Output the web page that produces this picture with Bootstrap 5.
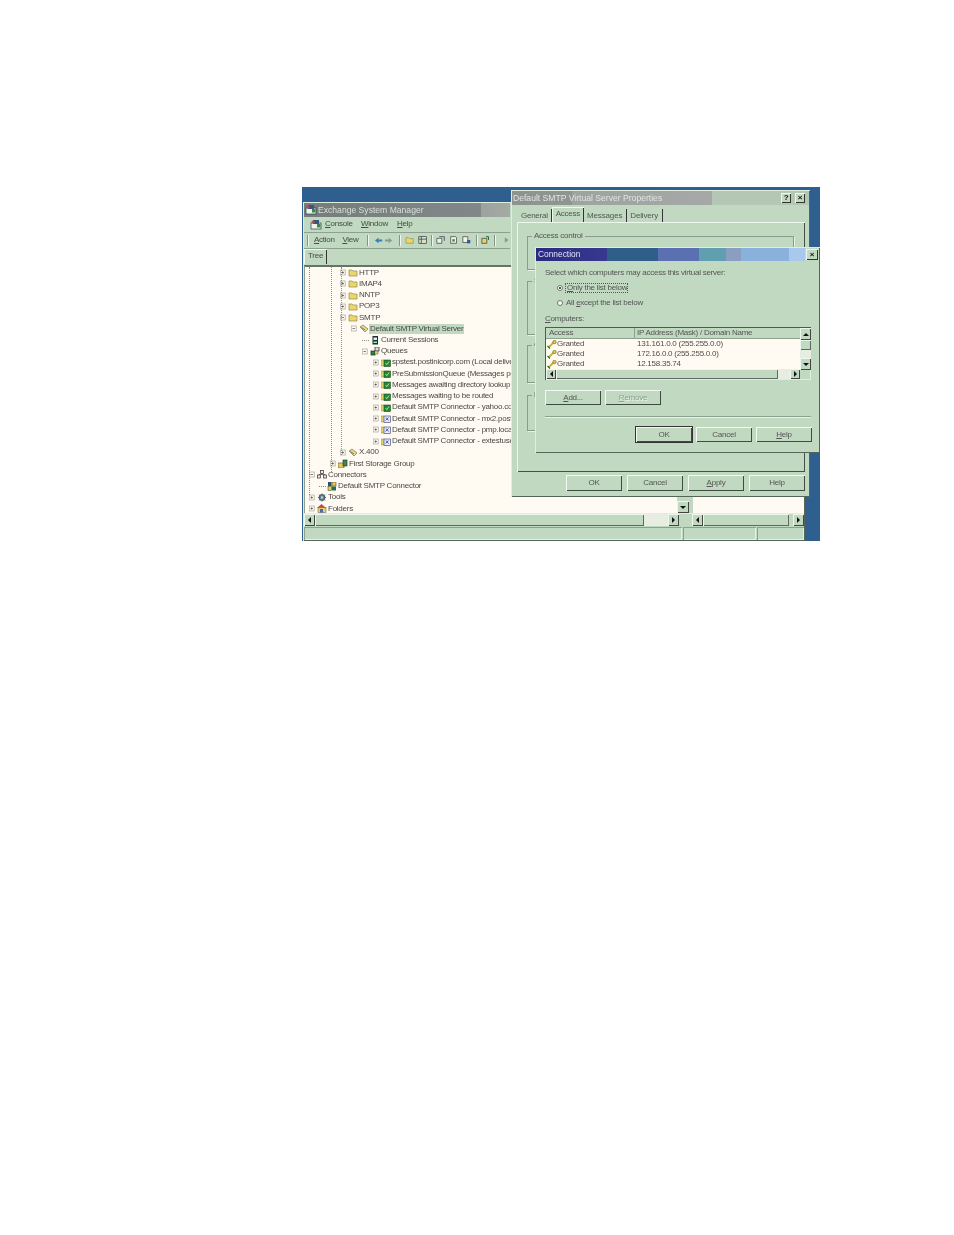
<!DOCTYPE html>
<html lang="en">
<head>
<meta charset="utf-8">
<title>Default SMTP Virtual Server Properties</title>
<link href="https://cdn.jsdelivr.net/npm/bootstrap@5.3.0/dist/css/bootstrap.min.css" rel="stylesheet">
<style>
html,body{background:#fff;margin:0;height:1235px;overflow:hidden}
body{font-family:"Liberation Sans",Arial,sans-serif;font-size:8px;line-height:1;color:#4a4a48;letter-spacing:-.25px}
.pg{padding:187px 0 0 302px}
.desk{position:relative;width:518px;height:354px;background:#2f5f8e;filter:blur(.35px)}
.winbox{position:absolute;background:#c0d9c0;box-shadow:inset 1px 1px 0 #dfeedf,inset -1px -1px 0 #55655a}
.mainw{left:1px;top:15px;width:502px;height:339px;padding:1px}
.propw{left:209px;top:3px;width:299px;height:307px;padding:1px}
.connw{left:233px;top:60px;width:285px;height:206px;padding:1px}
.ttl{height:14px;color:#d9dfd9;font-size:8.6px;letter-spacing:0;background:linear-gradient(90deg,#747d7a 0,#82888a 86%,#9da29e 86%,#a4aaa4 100%);padding-left:1px;width:206px}
.ttl svg{margin-right:1px}
.ttl2{height:14px;color:#dfe6df;font-size:8.6px;letter-spacing:0;width:200px;padding-left:1px;background:linear-gradient(90deg,#8d9490 0,#8f9692 30%,#9ea3a0 30%,#a5a8a6 100%)}
.ttlrow{background:#b4c6b4}
.capbtn{width:10px;height:10px;background:#c0d9c0;box-shadow:inset 1px 1px 0 #eef6ee,inset -1px -1px 0 #333;color:#111;font-weight:700;font-size:8px}
.menub{height:16px;border-bottom:1px solid #8da08f;padding-left:6px;width:206px}
.menub svg{margin-right:3px}
.mc{width:36px}.mw{width:36px}
.toolb{height:16px;border-bottom:1px solid #8da08f;width:206px;padding-left:3px}
.tact{margin-left:6px;width:31px}
.tsep1{margin:0 6px 0 8px}
.tsep2{margin:0 4px}
.tsep3{margin:0 5px}
.tarrow{width:22px}
.tic{margin-right:4px}
.tabstrip{height:16px;width:206px}
.treetab{width:23px;height:15px;box-shadow:inset 1px 1px 0 #eef6ee,inset -1px 0 0 #333}
.sep{width:1px;height:11px;background:#849587;box-shadow:1px 0 0 #eef6ee;flex:none}
.treewrap{height:249px;position:relative;background:#fffbf2;border-top:2px solid #66746a;border-left:1px solid #8da08f;overflow:hidden;padding-top:.2px}
.tvs{position:absolute;left:372px;top:0;bottom:0;width:13px;background:#c0d9c0;box-shadow:1px 0 0 #8da08f}
.tvs .arrb{height:12px;width:12px}
.tgap{position:absolute;left:385px;top:0;bottom:0;width:3px;background:#c0d9c0}
.gline{position:absolute;top:0;width:0;border-left:1px dotted #8c8c80}
.trow{height:11.24px;white-space:nowrap;color:#4a4a48;font-size:8px}
.trow svg{flex:none}
.exp{width:8px;flex:none}
.stub{height:1px;background-image:linear-gradient(90deg,#8c8c80 50%,transparent 50%);background-size:2px 1px}
.ico{margin-right:1px}
.hi{background:#c0d9c0;padding:1px}
.p4{padding-left:4px}.p14{padding-left:14px}.p25{padding-left:25px}.p35{padding-left:35px}.p46{padding-left:46px}.p57{padding-left:57px}.p68{padding-left:68px}
.sbar{height:13px;border-top:1px solid #dfeedf}
.arrb{width:11px;height:12px;flex:none;background:#c0d9c0;box-shadow:inset 1px 1px 0 #eef6ee,inset -1px -1px 0 #444;color:#111}
.thumb{background:#c0d9c0;box-shadow:inset 1px 1px 0 #eef6ee,inset -1px -1px 0 #5c6b60}
.dots{background-color:#e7ede2;background-image:radial-gradient(#b7c6b7 .6px,transparent .7px);background-size:2px 2px}
.stat{height:14px;padding-top:1px;gap:1px}
.statc{height:13px;box-shadow:inset 1px 1px 0 #8da08f,inset -1px -1px 0 #e6f1e6}
.wbtn{padding:0;width:56px;height:16px;border-radius:0;border:0;background:#c0d9c0;font-size:8px;line-height:1;letter-spacing:-.25px;color:#555;box-shadow:inset 1px 1px 0 #f2f8f2,inset -1px -1px 0 #3e4a42}
.wbtn.dflt{box-shadow:0 0 0 1px #333,inset 1px 1px 0 #f2f8f2,inset -1px -1px 0 #3e4a42}
.wbtn.dim{color:#8e9d91;text-shadow:.5px .5px 0 #eef6ee}
.tabsrow{padding:4px 0 0 6px;height:17px}
.wtab{height:13px;padding:3px 4px 0 3px;box-shadow:inset -1px 0 0 #333;color:#555}
.wtab.on{margin-top:-2px;height:15px;box-shadow:inset 1px 1px 0 #eef6ee,inset -1px 0 0 #333;padding:3px 4px 0 4px}
.wtab.wide{letter-spacing:-.15px;padding-right:5px}
.tpanel{height:250px;margin:0 4px 0 5px;box-shadow:inset 1px 1px 0 #eef6ee,inset -1px -1px 0 #445048;padding:14px 11px 0 10px}
.grp{border:1px solid #8a9b8e;box-shadow:1px 1px 0 #e8f2e8;position:relative}
.grp b{position:absolute;left:4px;top:-5px;font-weight:400;background:#c0d9c0;padding:0 2px;line-height:8px;color:#555}
.g1{height:34px;margin-bottom:11px}.g2{height:54px;margin-bottom:10px}.g3{height:38px;margin-bottom:12px}.g4{height:36px}
.actrow{padding:3px 4px 0 0;gap:5px}
.conttl{height:13px;font-size:8.4px;letter-spacing:0;padding-left:2px;line-height:13px;background:linear-gradient(90deg,#2a2a80 0,#383890 71px,#2f5f88 71px,#2f5f88 122px,#5a70b0 122px,#5a70b0 163px,#5f9fb0 163px,#5f9fb0 190px,#8a9fc0 190px,#8a9fc0 205px,#8ab0dc 205px,#8ab0dc 253px,#a8c8ec 253px,#a8c8ec 269px,#c0d9c0 269px)}
.conttl .capbtn{margin:1px 1px 0 0;line-height:10px;height:11px;width:12px}
.conttl span{color:#dce4f4}
.connb{padding:8px 8px 0 9px;color:#555}
.selline{margin-bottom:3px}
.radrow{height:15px}
.radlast{margin-bottom:5px}
.rad{width:6px;height:6px;border-radius:50%;background:#fffbf2;border:1px solid #6d7a70;margin:0 3px 0 12px;flex:none;position:relative}
.rad.sel::after{content:"";position:absolute;left:1px;top:1px;width:2px;height:2px;background:#222;border-radius:50%}
.focusd{outline:1px dotted #555;padding:0 0 0 1px}
.lst{height:53px;width:266px;box-shadow:inset 1px 1px 0 #4e5a52,inset -1px -1px 0 #e0eee0;position:relative;padding:1px}
.lhead{height:11px;width:254px;border-bottom:1px solid #8da08f}
.lc1{width:88px;padding-left:3px}
.lc2{padding-left:3px;box-shadow:inset 1px 0 0 #8da08f;height:10px;line-height:10px}
.lbody{background:#fffbf2;width:254px;height:30px;color:#4e4e4c}
.lrow{height:10.1px}
.lk{width:11px;flex:none;padding-left:1px}
.lgr{width:80px;flex:none}
.vs{position:absolute;left:255px;top:1px;width:11px;height:42px}
.vs .thumb{height:11px}
.vs .dots{height:9px}
.hs{height:10px;width:254px}
.hs .arrb{height:10px;width:10px}
.addrow{margin-top:10px}
.hr1{border-top:1px solid #8da08f;border-bottom:1px solid #e6f1e6;height:2px;width:266px;margin-top:11px}
.okrow{margin-top:9px;width:267px}
.okrow .wbtn,.addrow .wbtn{height:15px}
</style>
</head>
<body>
<svg width="0" height="0" class="position-absolute">
  <defs>
    <symbol id="folder" viewBox="0 0 10 9"><path d="M1 2h3l1 1h4v5H1z" fill="#ecd66a" stroke="#8f8a55" stroke-width=".7"/></symbol>
    <symbol id="plus" viewBox="0 0 8 7"><rect x=".2" y="1" width="5" height="5" fill="#fffbf2" stroke="#a5a59a" stroke-width=".7"/><path d="M1.500 3.500h2.400M2.700 2.300v2.400" stroke="#444" stroke-width=".7"/></symbol>
    <symbol id="minus" viewBox="0 0 8 7"><rect x=".2" y="1" width="5" height="5" fill="#fffbf2" stroke="#a5a59a" stroke-width=".7"/><path d="M1.500 3.500h2.400" stroke="#444" stroke-width=".7"/></symbol>
    <symbol id="server" viewBox="0 0 10 9"><path d="M1 3l3-2 5 4-3 3z" fill="#e8d98a" stroke="#777755" stroke-width=".7"/><path d="M2.500 3.500l3.500 2.500" stroke="#445" stroke-width=".7"/></symbol>
    <symbol id="queue" viewBox="0 0 10 9"><path d="M0 2h3l1 1h2v5H0z" fill="#e6cf66" stroke="#8a8450" stroke-width=".5"/><rect x="3" y="2" width="6.500" height="6.500" fill="#1f8a2e" stroke="#204a24" stroke-width=".6"/><path d="M4.500 5.500l1.500 1 2-3" fill="none" stroke="#dff2c0" stroke-width=".8"/></symbol>
    <symbol id="queue2" viewBox="0 0 10 9"><path d="M0 2h3l1 1h2v5H0z" fill="#e6cf66" stroke="#8a8450" stroke-width=".5"/><rect x="3" y="2" width="6.500" height="6.500" fill="#e8ecf4" stroke="#303a70" stroke-width=".6"/><path d="M4.500 6.500l3-3M5 3.500l2.500 3" stroke="#2233aa" stroke-width=".8"/></symbol>
    <symbol id="queues" viewBox="0 0 10 9"><rect x="5" y="0" width="4" height="4" fill="#ddd" stroke="#222" stroke-width=".7"/><rect x="1" y="4" width="4" height="4" fill="#2e8a38" stroke="#222" stroke-width=".7"/><path d="M5 4h3v3H5" fill="#e6cf66" stroke="#555" stroke-width=".5"/></symbol>
    <symbol id="session" viewBox="0 0 9 9"><rect x="2" y="0" width="5.500" height="8.500" fill="#1d2f3a"/><rect x="3" y="1.500" width="3.500" height="2.500" fill="#e8f0f0"/><rect x="3" y="5.500" width="3.500" height="1.500" fill="#8fa"/></symbol>
    <symbol id="storage" viewBox="0 0 10 9"><path d="M0 4h6v5H0z" fill="#e4cc55" stroke="#555533" stroke-width=".6"/><rect x="5" y="1" width="4" height="6" fill="#3a8a40" stroke="#223" stroke-width=".6"/></symbol>
    <symbol id="conn" viewBox="0 0 10 9"><rect x="3.500" y=".5" width="3" height="3" fill="#e8e8e8" stroke="#333" stroke-width=".7"/><rect x=".5" y="5" width="3" height="3" fill="#e8e8e8" stroke="#333" stroke-width=".7"/><rect x="6.500" y="5" width="3" height="3" fill="#e8e8e8" stroke="#333" stroke-width=".7"/><path d="M5 3.500V5M2 5V4.500h6V5" fill="none" stroke="#333" stroke-width=".6"/></symbol>
    <symbol id="smtpconn" viewBox="0 0 10 9"><rect x="1" y="0" width="3.500" height="4" fill="#33506a"/><rect x="5" y="0" width="4" height="4" fill="#e4cc55" stroke="#333" stroke-width=".5"/><rect x="1" y="4.500" width="3.500" height="4" fill="#e4cc55" stroke="#333" stroke-width=".5"/><rect x="5" y="4.500" width="4" height="4" fill="#2d6d45"/></symbol>
    <symbol id="gear" viewBox="0 0 10 9"><circle cx="5" cy="4.500" r="3" fill="#7d97a8" stroke="#334" stroke-width=".8"/><path d="M5 .5v8M1 4.500h8M2 1.500l6 6M8 1.500l-6 6" stroke="#3a6a7a" stroke-width=".9"/><circle cx="5" cy="4.500" r="1.200" fill="#c0d9c0"/></symbol>
    <symbol id="foldset" viewBox="0 0 10 9"><path d="M4.500 0L9 4H0z" fill="#c94a3a"/><rect x="1" y="3.500" width="8" height="5" fill="#e4d070" stroke="#555" stroke-width=".5"/><rect x="3" y="5" width="3" height="3.500" fill="#4a6aa8"/></symbol>
    <symbol id="mmc" viewBox="0 0 12 11"><rect x="1" y="4" width="10" height="6" fill="#ecf1ec" stroke="#26405c" stroke-width=".7"/><path d="M3 1h6v4H3z" fill="#33587e"/><circle cx="3" cy="3" r="1.600" fill="#c44"/><rect x="7" y="5" width="3.500" height="3.500" fill="#3a8a40"/></symbol>
    <symbol id="key" viewBox="0 0 10 9"><path d="M1.500 7.500l5-5" stroke="#c9b23a" stroke-width="1.800"/><circle cx="7.500" cy="2" r="1.700" fill="#e6d24e" stroke="#3a3a20" stroke-width=".5"/><path d="M.5 6l2.500 2.500" stroke="#1e7a2e" stroke-width="1.300"/></symbol>
  </defs>
</svg>
<div class="pg">
<div class="desk">

  <section class="winbox mainw d-flex flex-column">
    <div class="d-flex align-items-center ttl"><svg width="12" height="11"><use href="#mmc"/></svg><span>Exchange System Manager</span></div>
    <div class="d-flex align-items-center menub">
      <svg width="12" height="11"><use href="#mmc"/></svg>
      <span class="mc"><u>C</u>onsole</span><span class="mw"><u>W</u>indow</span><span><u>H</u>elp</span>
    </div>
    <div class="d-flex align-items-center toolb">
      <span class="sep"></span><span class="tact"><u>A</u>ction</span><span><u>V</u>iew</span>
      <span class="sep tsep1"></span>
      <svg class="tarrow" width="22" height="9" viewBox="0 0 22 9"><path d="M1 4.500L5 1.500v2h4v2H5v2z" fill="#3c7fb0"/><path d="M20 4.500L16 1.500v2h-4v2h4v2z" fill="#8a9a98"/></svg>
      <span class="sep tsep3"></span>
      <svg width="10" height="10" class="tic"><use href="#folder"/></svg>
      <svg width="10" height="10" viewBox="0 0 11 10"><rect x="1" y="1" width="9" height="8" fill="#d8e2c0" stroke="#333" stroke-width=".8"/><path d="M4 1v8M1 4h9" stroke="#334a8a"/></svg>
      <span class="sep tsep2"></span>
      <svg width="10" height="10" class="tic" viewBox="0 0 11 10"><path d="M1 3h6v6H1z" fill="#eee" stroke="#333" stroke-width=".8"/><path d="M4 1h6v5" fill="none" stroke="#335" stroke-width=".9"/></svg>
      <svg width="10" height="10" class="tic" viewBox="0 0 11 10"><path d="M2 1h6l1 1v7H2z" fill="#f2f4ea" stroke="#333" stroke-width=".8"/><path d="M4 4h3v3H4z" fill="#4a8a4a"/></svg>
      <svg width="10" height="10" viewBox="0 0 11 10"><path d="M1 1h6v7H1z" fill="#f2f4ea" stroke="#333" stroke-width=".8"/><path d="M6 5h4v4H6z" fill="#3a5a9a"/></svg>
      <span class="sep tsep2"></span>
      <svg width="10" height="10" viewBox="0 0 11 10"><path d="M1 3h6v6H1z" fill="#e4d070" stroke="#333" stroke-width=".8"/><path d="M6 1h3v4" fill="none" stroke="#2a6a3a" stroke-width="1.200"/></svg>
      <span class="sep tsep2"></span>
      <svg width="8" height="8" class="ms-1" viewBox="0 0 8 8"><path d="M2 1l4 3-4 3z" fill="#8a9a90"/></svg>
    </div>
    <div class="tabstrip d-flex"><div class="treetab d-flex align-items-center justify-content-center">Tree</div></div>
    <div class="treewrap">
      <span class="gline" style="left:4px;height:228px"></span>
      <span class="gline" style="left:26px;height:205px"></span>
      <span class="gline" style="left:36px;height:188px"></span>
      <div class="trow d-flex align-items-center p35"><svg class="exp" width="8" height="7"><use href="#plus"/></svg><svg class="ico" width="10" height="9"><use href="#folder"/></svg><span>HTTP</span></div>
      <div class="trow d-flex align-items-center p35"><svg class="exp" width="8" height="7"><use href="#plus"/></svg><svg class="ico" width="10" height="9"><use href="#folder"/></svg><span>IMAP4</span></div>
      <div class="trow d-flex align-items-center p35"><svg class="exp" width="8" height="7"><use href="#plus"/></svg><svg class="ico" width="10" height="9"><use href="#folder"/></svg><span>NNTP</span></div>
      <div class="trow d-flex align-items-center p35"><svg class="exp" width="8" height="7"><use href="#plus"/></svg><svg class="ico" width="10" height="9"><use href="#folder"/></svg><span>POP3</span></div>
      <div class="trow d-flex align-items-center p35"><svg class="exp" width="8" height="7"><use href="#minus"/></svg><svg class="ico" width="10" height="9"><use href="#folder"/></svg><span>SMTP</span></div>
      <div class="trow d-flex align-items-center p46"><svg class="exp" width="8" height="7"><use href="#minus"/></svg><svg width="10" height="9"><use href="#server"/></svg><span class="hi">Default SMTP Virtual Server</span></div>
      <div class="trow d-flex align-items-center p57"><span class="exp stub"></span><svg class="ico" width="10" height="9"><use href="#session"/></svg><span>Current Sessions</span></div>
      <div class="trow d-flex align-items-center p57"><svg class="exp" width="8" height="7"><use href="#minus"/></svg><svg class="ico" width="10" height="9"><use href="#queues"/></svg><span>Queues</span></div>
      <div class="trow d-flex align-items-center p68"><svg class="exp" width="8" height="7"><use href="#plus"/></svg><svg class="ico" width="10" height="9"><use href="#queue"/></svg><span>spstest.postinicorp.com (Local delivery)</span></div>
      <div class="trow d-flex align-items-center p68"><svg class="exp" width="8" height="7"><use href="#plus"/></svg><svg class="ico" width="10" height="9"><use href="#queue"/></svg><span>PreSubmissionQueue (Messages pending)</span></div>
      <div class="trow d-flex align-items-center p68"><svg class="exp" width="8" height="7"><use href="#plus"/></svg><svg class="ico" width="10" height="9"><use href="#queue"/></svg><span>Messages awaiting directory lookup</span></div>
      <div class="trow d-flex align-items-center p68"><svg class="exp" width="8" height="7"><use href="#plus"/></svg><svg class="ico" width="10" height="9"><use href="#queue"/></svg><span>Messages waiting to be routed</span></div>
      <div class="trow d-flex align-items-center p68"><svg class="exp" width="8" height="7"><use href="#plus"/></svg><svg class="ico" width="10" height="9"><use href="#queue"/></svg><span>Default SMTP Connector - yahoo.com</span></div>
      <div class="trow d-flex align-items-center p68"><svg class="exp" width="8" height="7"><use href="#plus"/></svg><svg class="ico" width="10" height="9"><use href="#queue2"/></svg><span>Default SMTP Connector - mx2.postini</span></div>
      <div class="trow d-flex align-items-center p68"><svg class="exp" width="8" height="7"><use href="#plus"/></svg><svg class="ico" width="10" height="9"><use href="#queue2"/></svg><span>Default SMTP Connector - pmp.local</span></div>
      <div class="trow d-flex align-items-center p68"><svg class="exp" width="8" height="7"><use href="#plus"/></svg><svg class="ico" width="10" height="9"><use href="#queue2"/></svg><span>Default SMTP Connector - extestuser</span></div>
      <div class="trow d-flex align-items-center p35"><svg class="exp" width="8" height="7"><use href="#plus"/></svg><svg class="ico" width="10" height="9"><use href="#server"/></svg><span>X.400</span></div>
      <div class="trow d-flex align-items-center p25"><svg class="exp" width="8" height="7"><use href="#plus"/></svg><svg class="ico" width="10" height="9"><use href="#storage"/></svg><span>First Storage Group</span></div>
      <div class="trow d-flex align-items-center p4"><svg class="exp" width="8" height="7"><use href="#minus"/></svg><svg class="ico" width="10" height="9"><use href="#conn"/></svg><span>Connectors</span></div>
      <div class="trow d-flex align-items-center p14"><span class="exp stub"></span><svg class="ico" width="10" height="9"><use href="#smtpconn"/></svg><span>Default SMTP Connector</span></div>
      <div class="trow d-flex align-items-center p4"><svg class="exp" width="8" height="7"><use href="#plus"/></svg><svg class="ico" width="10" height="9"><use href="#gear"/></svg><span>Tools</span></div>
      <div class="trow d-flex align-items-center p4"><svg class="exp" width="8" height="7"><use href="#plus"/></svg><svg class="ico" width="10" height="9"><use href="#foldset"/></svg><span>Folders</span></div>
      <div class="tvs d-flex flex-column justify-content-end">
        <div class="arrb d-flex align-items-center justify-content-center"><svg width="6" height="5"><path d="M0 1h6L3 4z" fill="#111"/></svg></div>
      </div>
      <div class="tgap"></div>
    </div>
    <div class="sbar d-flex">
      <div class="arrb d-flex align-items-center justify-content-center"><svg width="5" height="6"><path d="M4 0v6L1 3z" fill="#111"/></svg></div>
      <div class="thumb" style="width:329px"></div>
      <div class="dots" style="width:24px"></div>
      <div class="arrb d-flex align-items-center justify-content-center"><svg width="5" height="6"><path d="M1 0v6l3-3z" fill="#111"/></svg></div>
      <div class="ms-auto d-flex" style="width:112px">
        <div class="arrb d-flex align-items-center justify-content-center"><svg width="5" height="6"><path d="M4 0v6L1 3z" fill="#111"/></svg></div>
        <div class="thumb flex-grow-1"></div>
        <div class="arrb ms-1 d-flex align-items-center justify-content-center"><svg width="5" height="6"><path d="M1 0v6l3-3z" fill="#111"/></svg></div>
      </div>
    </div>
    <div class="stat d-flex">
      <div class="statc" style="width:378px"></div>
      <div class="statc" style="width:73px"></div>
      <div class="statc flex-grow-1"></div>
    </div>
  </section>

  <section class="winbox propw">
    <div class="d-flex justify-content-between ttlrow">
      <div class="ttl2 d-flex align-items-center"><span>Default SMTP Virtual Server Properties</span></div>
      <div class="d-flex gap-1 align-items-center pe-1">
        <span class="capbtn d-flex align-items-center justify-content-center">?</span>
        <span class="capbtn d-flex align-items-center justify-content-center">×</span>
      </div>
    </div>
    <div class="d-flex tabsrow">
      <span class="wtab">General</span><span class="wtab on">Access</span><span class="wtab wide">Messages</span><span class="wtab wide">Delivery</span>
    </div>
    <div class="tpanel">
      <div class="grp g1"><b>Access control</b></div>
      <div class="grp g2"><b>S</b></div>
      <div class="grp g3"><b>C</b></div>
      <div class="grp g4"><b>R</b></div>
    </div>
    <div class="d-flex justify-content-end actrow">
      <button class="btn wbtn" type="button">OK</button>
      <button class="btn wbtn" type="button">Cancel</button>
      <button class="btn wbtn" type="button"><u>A</u>pply</button>
      <button class="btn wbtn" type="button">Help</button>
    </div>
  </section>

  <section class="winbox connw">
    <div class="conttl d-flex justify-content-between">
      <span>Connection</span>
      <div class="capbtn d-flex align-items-center justify-content-center">×</div>
    </div>
    <div class="connb">
      <div class="selline">Select which computers may access this virtual server:</div>
      <div class="d-flex align-items-center radrow"><span class="rad sel"></span><span class="focusd"><u>O</u>nly the list below</span></div>
      <div class="d-flex align-items-center radrow radlast"><span class="rad"></span><span>All <u>e</u>xcept the list below</span></div>
      <div class="mb-1"><u>C</u>omputers:</div>
      <div class="lst">
        <div class="lhead d-flex"><span class="lc1 d-flex align-items-center">Access</span><span class="lc2">IP Address (Mask) / Domain Name</span></div>
        <div class="lbody">
          <div class="lrow d-flex align-items-center"><svg class="lk" width="11" height="9"><use href="#key"/></svg><span class="lgr">Granted</span><span>131.161.0.0 (255.255.0.0)</span></div>
          <div class="lrow d-flex align-items-center"><svg class="lk" width="11" height="9"><use href="#key"/></svg><span class="lgr">Granted</span><span>172.16.0.0 (255.255.0.0)</span></div>
          <div class="lrow d-flex align-items-center"><svg class="lk" width="11" height="9"><use href="#key"/></svg><span class="lgr">Granted</span><span>12.158.35.74</span></div>
        </div>
        <div class="hs d-flex">
          <div class="arrb d-flex align-items-center justify-content-center"><svg width="5" height="6"><path d="M4 0v6L1 3z" fill="#111"/></svg></div>
          <div class="thumb" style="width:222px"></div>
          <div class="dots flex-grow-1"></div>
          <div class="arrb d-flex align-items-center justify-content-center"><svg width="5" height="6"><path d="M1 0v6l3-3z" fill="#111"/></svg></div>
        </div>
        <div class="vs d-flex flex-column">
          <div class="arrb d-flex align-items-center justify-content-center"><svg width="6" height="5"><path d="M0 4h6L3 1z" fill="#111"/></svg></div>
          <div class="thumb"></div>
          <div class="dots"></div>
          <div class="arrb d-flex align-items-center justify-content-center"><svg width="6" height="5"><path d="M0 1h6L3 4z" fill="#111"/></svg></div>
        </div>
      </div>
      <div class="d-flex gap-1 addrow">
        <button class="btn wbtn" type="button"><u>A</u>dd...</button>
        <button class="btn wbtn dim" type="button"><u>R</u>emove</button>
      </div>
      <div class="hr1"></div>
      <div class="d-flex justify-content-end gap-1 okrow">
        <button class="btn wbtn dflt" type="button">OK</button>
        <button class="btn wbtn" type="button">Cancel</button>
        <button class="btn wbtn" type="button"><u>H</u>elp</button>
      </div>
    </div>
  </section>
</div>
</div>
<script src="https://cdn.jsdelivr.net/npm/bootstrap@5.3.0/dist/js/bootstrap.bundle.min.js"></script>
</body>
</html>
